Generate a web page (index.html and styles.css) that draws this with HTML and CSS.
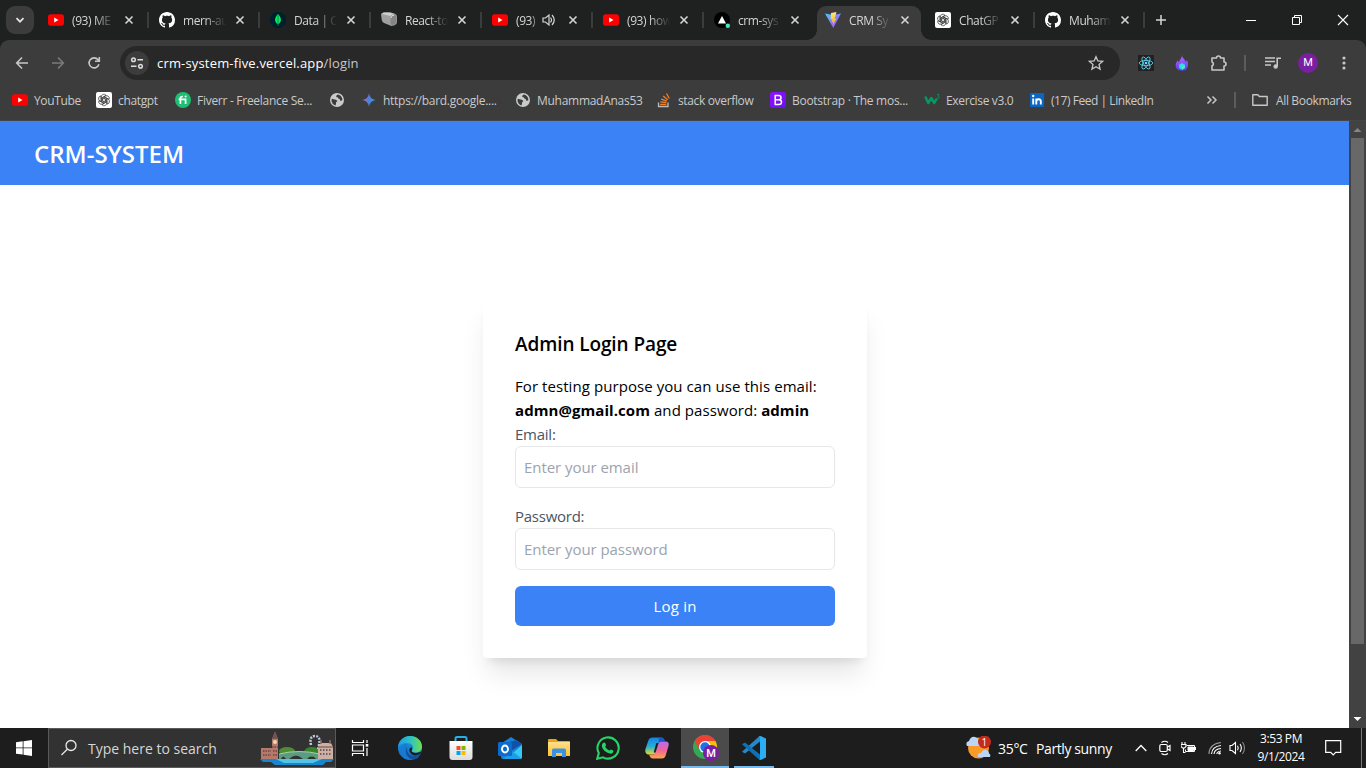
FILE: index.html
```html
<!DOCTYPE html>
<html lang="en">
<head>
<meta charset="utf-8">
<title>CRM System</title>
<link rel="stylesheet" href="styles.css">
</head>
<body>
<svg class="defs" width="0" height="0">
  <defs>
    <linearGradient id="vb" x1="0" y1="0" x2="1" y2="1"><stop offset="0" stop-color="#41d1ff"/><stop offset="1" stop-color="#bd34fe"/></linearGradient>
    <linearGradient id="vy" x1="0" y1="0" x2="0" y2="1"><stop offset="0" stop-color="#ffea83"/><stop offset="1" stop-color="#ffa800"/></linearGradient>
    <linearGradient id="bard"><stop offset="0" stop-color="#b06ab8"/><stop offset=".5" stop-color="#4a80dd"/><stop offset="1" stop-color="#2ea6e0"/></linearGradient>
    <linearGradient id="flame" x1="0" y1="0" x2="0" y2="1"><stop offset="0" stop-color="#b86bff"/><stop offset="1" stop-color="#5b3df0"/></linearGradient>
    <linearGradient id="edgeA" x1="0" y1="0" x2="1" y2="0"><stop offset="0" stop-color="#1d9de6"/><stop offset=".5" stop-color="#2cc1c4"/><stop offset="1" stop-color="#6de14d"/></linearGradient>
    <linearGradient id="edgeB" x1="0" y1="0" x2="0" y2="1"><stop offset="0" stop-color="#1b9de2"/><stop offset="1" stop-color="#1267c4"/></linearGradient>
    <linearGradient id="copA" x1="0" y1="0" x2="0" y2="1"><stop offset="0" stop-color="#1482e8"/><stop offset=".55" stop-color="#27b1d0"/><stop offset="1" stop-color="#e8dc27"/></linearGradient>
    <linearGradient id="copB" x1="0" y1="0" x2="0" y2="1"><stop offset="0" stop-color="#b56cf3"/><stop offset=".5" stop-color="#f0649c"/><stop offset="1" stop-color="#ffa34f"/></linearGradient>
    <linearGradient id="folderG" x1="0" y1="0" x2="0" y2="1"><stop offset="0" stop-color="#ffe08a"/><stop offset="1" stop-color="#fcc232"/></linearGradient>
    <linearGradient id="bs" x1="0" y1="0" x2="1" y2="1"><stop offset="0" stop-color="#9013fe"/><stop offset="1" stop-color="#6610f2"/></linearGradient>
    <linearGradient id="store" x1="0" y1="0" x2="0" y2="1"><stop offset="0" stop-color="#fff"/><stop offset="1" stop-color="#dcdcdc"/></linearGradient>
    <symbol id="yt" viewBox="0 0 16 16"><rect y="2.3" width="16" height="11.4" rx="2.8" fill="#f00"/><path d="M6.2 5.6v4.8L10.5 8z" fill="#fff"/></symbol>
    <symbol id="gh" viewBox="0 0 16 16"><path fill="#fff" d="M8 0C3.58 0 0 3.58 0 8c0 3.54 2.29 6.53 5.47 7.59.4.07.55-.17.55-.38 0-.19-.01-.82-.01-1.49-2.01.37-2.53-.49-2.69-.94-.09-.23-.48-.94-.82-1.13-.28-.15-.68-.52-.01-.53.63-.01 1.08.58 1.23.82.72 1.21 1.87.87 2.33.66.07-.52.28-.87.51-1.07-1.78-.2-3.64-.89-3.64-3.95 0-.87.31-1.59.82-2.15-.08-.2-.36-1.02.08-2.12 0 0 .67-.21 2.2.82.64-.18 1.32-.27 2-.27s1.36.09 2 .27c1.53-1.04 2.2-.82 2.2-.82.44 1.1.16 1.92.08 2.12.51.56.82 1.27.82 2.15 0 3.07-1.87 3.75-3.65 3.95.29.25.54.73.54 1.48 0 1.07-.01 1.93-.01 2.2 0 .21.15.46.55.38A8.01 8.01 0 0 0 16 8c0-4.42-3.58-8-8-8"/></symbol>
    <symbol id="gpt" viewBox="0 0 16 16"><rect width="16" height="16" rx="2" fill="#fff"/><g fill="none" stroke="#222" stroke-width=".65"><g id="petal"><path d="M5.300 9.600V4.800a2.600 2.600 0 0 1 4.700-1.500L6.600 5.300v4.100"/></g><use href="#petal" transform="rotate(60 8 8)"/><use href="#petal" transform="rotate(120 8 8)"/><use href="#petal" transform="rotate(180 8 8)"/><use href="#petal" transform="rotate(240 8 8)"/><use href="#petal" transform="rotate(300 8 8)"/></g></symbol>
    <symbol id="globe" viewBox="0 0 16 16"><circle cx="8" cy="8" r="7" fill="#c9cacc"/><path d="M2.800 6.800l4 .9q1.700.5 1.500 1.800l-1.200.4q.2 1.300-.6 3.600Q3 12.500 2.500 8.500zM9 2.600q-2 .4-1.800 1.800.2 1 1.500.9.700 2 2 1.700l.4 1.400q1.400.7 2.300-.3Q13.200 3.600 9 2.600z" fill="#3c3c3c"/></symbol>
    <symbol id="x" viewBox="0 0 16 16"><path d="M4.500 4.500l7 7m0-7l-7 7" stroke="#d4d5d6" stroke-width="1.600" fill="none"/></symbol>
  </defs>
</svg>

<header class="tabstrip">
  <button class="tab-search"><svg width="12" height="12"><path d="M2.500 4.200L6 7.700l3.500-3.500" fill="none" stroke="#e3e3e3" stroke-width="1.800"/></svg></button>
  <div class="tab"><svg class="fav"><use href="#yt"/></svg><span>(93) ME</span><svg class="close"><use href="#x"/></svg></div>
  <div class="tab"><svg class="fav"><use href="#gh"/></svg><span>mern-au</span><svg class="close"><use href="#x"/></svg></div>
  <div class="tab"><svg class="fav" viewBox="0 0 16 16"><circle cx="8" cy="8" r="8" fill="#001e2b"/><path d="M8 2c4 4 3.800 8 0 10.500C4.200 10 4 6 8 2z" fill="#00ed64"/><path d="M8 3v11" stroke="#0a7a45" stroke-width=".9"/></svg><span>Data | C</span><svg class="close"><use href="#x"/></svg></div>
  <div class="tab"><svg class="fav" viewBox="0 0 16 16"><path d="M0 2.500Q0 .800 2.500.500L9 .300l5 1.500q2 1 2 3v5.500q0 2-2.500 3l-3 .7L3 11Q1 10 .8 8z" fill="#a0a0a0"/><path d="M1 2Q2 .600 4 .600l5 .1 3.500 1L9.500 4z" fill="#cfcfcf"/><path d="M9.500 6q0-2 1.500-2.800T14 3q1.500.7 1.500 2.500v5q-1 2-4.500 2.800-1.500-.8-1.500-2.500z" fill="#858585"/><path d="M10 6q0-1.500 1-2.200l2-.6" fill="none" stroke="#e2e2e2"/></svg><span>React-to</span><svg class="close"><use href="#x"/></svg></div>
  <div class="tab"><svg class="fav"><use href="#yt"/></svg><span class="short">(93)</span><svg class="sound" viewBox="0 0 14 14"><path d="M1 5h2.500L7 2v10L3.500 9H1z" fill="none" stroke="#d4d5d6" stroke-width="1.200"/><path d="M8.500 4.500q2 2.500 0 5M10 2q4.500 5 0 10" fill="none" stroke="#d4d5d6" stroke-width="1.200"/></svg><svg class="close"><use href="#x"/></svg></div>
  <div class="tab"><svg class="fav"><use href="#yt"/></svg><span>(93) how</span><svg class="close"><use href="#x"/></svg></div>
  <div class="tab nosep"><svg class="fav" viewBox="0 0 16 16"><circle cx="8" cy="8" r="8" fill="#000"/><path d="M8 4l4 7.500H4z" fill="#fff"/><circle cx="13.800" cy="13.800" r="2.200" fill="#50e3c2"/></svg><span>crm-sys</span><svg class="close"><use href="#x"/></svg></div>
  <div class="tab active"><svg class="fav" viewBox="0 0 16 16"><path d="M0 1.500L8 3l8-1.500L8.300 16z" fill="url(#vb)"/><path d="M11.500 0L6 1.100 5.600 7.700l1.800-.4-.6 3 1.400-.4-.5 3.600 3.600-7-1.700.3z" fill="url(#vy)"/></svg><span>CRM Sy</span><svg class="close"><use href="#x"/></svg></div>
  <div class="tab late"><svg class="fav"><use href="#gpt"/></svg><span>ChatGP</span><svg class="close"><use href="#x"/></svg></div>
  <div class="tab late"><svg class="fav"><use href="#gh"/></svg><span>Muham</span><svg class="close"><use href="#x"/></svg></div>
  <svg class="newtab" width="12" height="12"><path d="M6 1v10M1 6h10" stroke="#d4d5d6" stroke-width="1.500"/></svg>
  <div class="winctl">
    <svg width="12" height="12"><path d="M1 6.500h10" stroke="#fff"/></svg>
    <svg width="12" height="12" fill="none" stroke="#fff"><path d="M1.500 3.500h7v7h-7zM3.500 3.500v-2h7v7h-2"/></svg>
    <svg width="12" height="12"><path d="M1 1l10 10M11 1L1 11" stroke="#fff" stroke-width="1.100"/></svg>
  </div>
</header>

<div class="toolbar-wrap">
<nav class="toolbar">
  <svg class="nav-i" viewBox="0 0 16 16"><path d="M14 8H3M8 2.500L2.700 8 8 13.500" fill="none" stroke="#c7c7c7" stroke-width="1.600"/></svg>
  <svg class="nav-i" viewBox="0 0 16 16"><path d="M2 8h11M8 2.500L13.300 8 8 13.500" fill="none" stroke="#7b7b7b" stroke-width="1.600"/></svg>
  <svg class="nav-i" viewBox="0 0 16 16"><path d="M12.900 9.200A5 5 0 1 1 12 4.800l1 1M13.300 2v4.200H9" fill="none" stroke="#c7c7c7" stroke-width="1.600"/></svg>
  <div class="omnibox">
    <div class="chip"><svg width="14" height="14" fill="none" stroke="#dedede" stroke-width="1.500"><circle cx="3.500" cy="3.700" r="1.800"/><path d="M7.500 3.700H13M1 10.300h5.500"/><circle cx="10.500" cy="10.300" r="1.800"/></svg></div>
    <span class="url">crm-system-five.vercel.app<i>/login</i></span>
    <svg class="star" viewBox="0 0 16 16"><path d="M8 1.700l1.850 4.300 4.700.4-3.550 3.100 1.050 4.600L8 11.650 3.950 14.100 5 9.500 1.450 6.400l4.700-.4z" fill="none" stroke="#c7c7c7" stroke-width="1.300"/></svg>
  </div>
  <div class="ext">
    <svg viewBox="0 0 16 16"><rect width="16" height="16" fill="#212121"/><g fill="none" stroke="#61dafb" stroke-width=".8"><ellipse cx="8" cy="8" rx="6.800" ry="2.600"/><ellipse cx="8" cy="8" rx="6.800" ry="2.600" transform="rotate(60 8 8)"/><ellipse cx="8" cy="8" rx="6.800" ry="2.600" transform="rotate(120 8 8)"/></g><circle cx="8" cy="8" r="1.300" fill="#61dafb"/></svg>
    <svg class="flame" viewBox="0 0 16 16"><path d="M8 0c.3 3.500 3.300 4.300 3.800 7.200L13 5c2 4.500 1.500 10.800-5 10.800S0 10 3.500 5.500L5 7.500C5 4.500 8 4 8 0z" fill="url(#flame)"/><path d="M8 8l2.900 1.700v3.400L8 14.800l-2.900-1.700V9.700z" fill="#35d7f2"/><path d="M8 11.400l2.900-1.700v3.400L8 14.800z" fill="#42efb0"/></svg>
    <svg class="puzzle" viewBox="0 0 18 18"><path d="M2 4h4.500a2 2 0 0 1 4 0H14v4a2 2 0 0 1 0 4v4H2v-4.200a2 2 0 0 0 0-3.800z" fill="none" stroke="#c7c7c7" stroke-width="1.600" stroke-linejoin="round"/></svg>
    <b class="vsep"></b>
    <svg class="media" viewBox="0 0 16 16"><path d="M0 3h10M0 6.500h10M0 10h6" stroke="#c7c7c7" stroke-width="1.500"/><path d="M12.200 11V3.300H16" fill="none" stroke="#c7c7c7" stroke-width="1.600"/><circle cx="10.700" cy="11.500" r="2.200" fill="#c7c7c7"/></svg>
    <span class="avatar">M</span>
    <svg class="dots" viewBox="0 0 4 16"><circle cx="2" cy="3" r="1.600"/><circle cx="2" cy="8" r="1.600"/><circle cx="2" cy="13" r="1.600"/></svg>
  </div>
</nav>

<nav class="bookmarks">
  <a class="w84"><svg><use href="#yt"/></svg>YouTube</a>
  <a class="w79"><svg><use href="#gpt"/></svg>chatgpt</a>
  <a class="w154"><svg viewBox="0 0 16 16"><circle cx="8" cy="8" r="8" fill="#1dbf73"/><path d="M5.400 12V6.200Q5.400 4.500 7.800 4.700M3.600 7.300h7V12" fill="none" stroke="#fff" stroke-width="1.700"/><circle cx="10.600" cy="4.600" r="1" fill="#fff"/></svg><span>Fiverr - Freelance Se...</span></a>
  <a class="w32"><svg><use href="#globe"/></svg></a>
  <a class="w154"><svg viewBox="0 0 16 16"><path d="M8 1.500Q9 7 14.500 8 9 9 8 14.500 7 9 1.500 8 7 7 8 1.500z" fill="url(#bard)"/></svg>https://bard.google....</a>
  <a class="w141"><svg><use href="#globe"/></svg>MuhammadAnas53</a>
  <a class="w114"><svg viewBox="0 0 16 16"><path d="M2.500 10.500v4h9.500v-4" fill="none" stroke="#bcbbbb" stroke-width="1.300"/><path d="M4.200 12.400h6M4.400 9.900l6 .7M5.200 7.100l5.600 2M7.200 4l4.500 3.700M10.500 1.500l2.800 5" stroke="#f48024" stroke-width="1.300"/></svg>stack overflow</a>
  <a class="w154"><svg viewBox="0 0 16 16"><rect width="16" height="16" rx="2.500" fill="url(#bs)"/><path d="M5.200 3.500h3.500q2.300 0 2.300 2.200 0 2-2.300 2H5.200h3.800q2.500 0 2.500 2.400T9 12.500H5.200z" fill="none" stroke="#fff" stroke-width="1.500"/></svg>Bootstrap · The mos...</a>
  <a class="w106"><svg viewBox="0 0 16 16"><path d="M1.200 4.500L4.300 11l3-5 3 5 2.500-4.500" fill="none" stroke="#059862" stroke-width="2.500" stroke-linejoin="round"/><path d="M13 2.500h2l-1 1.500q1.800 0 .8 2-.8.600-1.800.2" fill="none" stroke="#059862" stroke-width=".8"/></svg>Exercise v3.0</a>
  <a class="feed"><svg viewBox="0 0 16 16"><rect x="0" y="1" width="14" height="14" rx="1" fill="#0a66c2"/><path d="M3.200 6.500v6M6.300 6.500v6M6.300 9.500Q6.500 7.300 8.700 7.300t2.100 2.300v2.900" fill="none" stroke="#fff" stroke-width="1.900"/><circle cx="3.200" cy="4" r="1.200" fill="#fff"/></svg>(17) Feed | LinkedIn</a>
  <div class="bm-right">
    <svg class="more" width="12" height="12"><path d="M1.500 2.500L5 6 1.500 9.500M6.500 2.500L10 6 6.500 9.500" fill="none" stroke="#c7c7c7" stroke-width="1.500"/></svg>
    <b class="vsep"></b>
    <a><svg viewBox="0 0 16 16"><path d="M.8 13.200V2.800h5l1.600 1.700h7.800v8.700z" fill="none" stroke="#c7c7c7" stroke-width="1.400" stroke-linejoin="round"/></svg><span class="all">All Bookmarks</span></a>
  </div>
</nav>
</div>

<div class="viewport">
  <div class="page">
    <div class="brandbar"><h1>CRM-SYSTEM</h1></div>
    <main>
      <form class="card">
        <h2>Admin Login Page</h2>
        <p>For testing purpose you can use this email:<br><b>admn@gmail.com</b> and password: <b>admin</b></p>
        <label>Email:</label>
        <input type="text" placeholder="Enter your email">
        <label>Password:</label>
        <input type="text" placeholder="Enter your password">
        <button type="button">Log in</button>
      </form>
    </main>
  </div>
  <div class="scrollbar">
    <svg width="17" height="17"><path d="M4.500 11h8l-4-4z" fill="#868686"/></svg>
    <div class="thumb"></div>
    <svg class="down" width="17" height="17"><path d="M4.500 6h8l-4 4z" fill="#fff"/></svg>
  </div>
</div>

<footer class="taskbar">
  <div class="start"><svg width="16" height="16" fill="#fff"><path d="M0 2.200L6.700 1.300V7.500H0zM7.500 1.200L16 0v7.500H7.500zM0 8.300h6.700v6.300L0 13.700zM7.500 8.300H16V16l-8.500-1.200z"/></svg></div>
  <div class="search">
    <svg width="18" height="18" fill="none" stroke="#e8e8e8" stroke-width="1.300"><circle cx="11" cy="6.500" r="5"/><path d="M7.300 10.300L1.500 16"/></svg>
    <span>Type here to search</span>
    <svg class="scene" width="74" height="37" viewBox="0 0 74 37">
      <ellipse cx="27" cy="21" rx="8" ry="4" fill="#4f8c35"/><ellipse cx="52" cy="22" rx="8" ry="5" fill="#37842b"/>
      <path d="M0 29h74l-3 3h-5l-3 3H15l-4-3H3z" fill="#1686cf"/><path d="M16 29h46l-9 4H24z" fill="#53c3e7"/>
      <path d="M19 29v-5q20-5 41 0v5h-4q-4-6-9 0h-4q-7-7-14 0h-3q-3-5-5 0z" fill="#5b9b83"/><path d="M19 24q20-5 41 0" fill="none" stroke="#a4d3a1"/>
      <path d="M1 18h11V9l3-7 3 7v20H1z" fill="#b5796a"/><path d="M12 9l3-8 3 8z" fill="#75534f"/><path d="M12 17h6M3 21h8M3 25h8M13 21h4M13 25h4" stroke="#6e4143" stroke-width="1.500" stroke-dasharray="1.500 1"/><circle cx="15" cy="12" r="2" fill="#f0d8af"/>
      <path d="M51 15q-2-9 4-9t4 9l-1 5" fill="none" stroke="#becde2" stroke-width="2.500" stroke-dasharray="2 1.200"/>
      <path d="M58 17l3-4h10l2 4v12H58z" fill="#ceb0a2"/><path d="M58 17h15M61 10v4M70 10v4" stroke="#8e6b68" stroke-width="1.500"/><path d="M60 20h12M60 24h12" stroke="#735b68" stroke-width="2" stroke-dasharray="1.500 1.500"/>
    </svg>
  </div>
  <div class="task tview"><svg width="18" height="18" fill="none" stroke="#fff" stroke-width="1.200"><path d="M1.500 1v2.500h11V1M1.500 6h11v6h-11zM1.500 17v-2.500h11V17M16 1v3M16 9v8"/><path d="M14.700 5h2.600v2.600h-2.600z" fill="#fff" stroke="none"/></svg></div>
  <div class="task edge"><svg width="24" height="24" viewBox="0 0 24 24"><circle cx="12" cy="12" r="12" fill="url(#edgeB)"/><path d="M0 11C1 4 6 0 12 0c7 0 12 5 12 10.500 0 4-3 6-6.500 6-3 0-4.500-1-3.500-2.500 3-4-1-7-5-7-4 0-8 2-9 4z" fill="url(#edgeA)"/><path d="M8.500 10c-3 6 1 12 8 12.500-8 4-15-2-14-9 .7-4 4-6 7-5.500z" fill="#1a79d3"/><path d="M9.500 10.500c-2 5 2 10 7.500 9.500 2 0 4-1 5.500-2l-2.500 4c-2 1.500-5.500 1.700-8 .5-5-3-5-9-2.500-12z" fill="#10539d"/><path d="M13.800 11.500c1.300 2-1.500 3.500.7 4.700 2.500 1.300 6 .8 9-.7L22 18c-4 2.400-8.500 1.800-10.300-2.200-.9-2.200.3-4.700 2.100-4.300z" fill="#1d1d1d"/></svg></div>
  <div class="task"><svg width="24" height="24" viewBox="0 0 24 24"><path d="M6.500 6V2.500q0-1.500 1.500-1.500h8q1.500 0 1.500 1.500V6" fill="none" stroke="#2baee8" stroke-width="2"/><path d="M.5 5h23v16q0 3-3 3h-17q-3 0-3-3z" fill="url(#store)"/><path d="M7.500 10h4v4h-4z" fill="#f25022"/><path d="M12.500 10h4v4h-4z" fill="#7fba00"/><path d="M7.500 15h4v4h-4z" fill="#00a4ef"/><path d="M12.500 15h4v4h-4z" fill="#ffb900"/></svg></div>
  <div class="task"><svg width="24" height="24" viewBox="0 0 24 24"><path d="M3 7.500L13 1l11 7v13q0 2-2 2H5q-2 0-2-2z" fill="#1a7fd6"/><path d="M11 6l8-2 5 4-11 7z" fill="#0f53a8"/><path d="M24 9v12q0 2-2 2H8z" fill="#35c9f5"/><path d="M5 23l9-8 9 7q-.5 1-1.500 1z" fill="#1e9ce8"/><rect y="6" width="14" height="14" rx="1.500" fill="#0b6cce"/><ellipse cx="7" cy="13" rx="3" ry="3.500" fill="none" stroke="#fff" stroke-width="1.900"/></svg></div>
  <div class="task"><svg width="22" height="22" viewBox="0 0 22 22"><path d="M0 3q0-1 1-1h7l2 2h11q1 0 1 1v14H0z" fill="#e8a416"/><path d="M0 5h22v14H0z" fill="url(#folderG)"/><path d="M4 20v-7q0-1.500 1.500-1.500h11q1.500 0 1.500 1.500v7h-4v-4H8v4z" fill="#3b93df"/></svg></div>
  <div class="task"><svg width="24" height="24" viewBox="0 0 24 24"><path d="M1.200 22.800l1.600-5.700A10.600 10.600 0 1 1 7 21.300z" fill="none" stroke="#25d366" stroke-width="2.100"/><path d="M8 6.500c.6-.3 1 0 1.200.5l.8 1.900c.2.700-.6 1.200-.9 1.700 1 2 2.400 3.300 4.300 4 .6-.3 1-1.400 1.500-1.200l2.300 1.100c.6.400.1 1.700-.4 2.300-1.200 1.300-3.500.9-5.300 0-2.200-1-4.200-2.900-5.200-5C5.300 9.500 6 7.300 8 6.500z" fill="#25d366"/></svg></div>
  <div class="task"><svg width="24" height="24" viewBox="0 0 24 24"><path d="M7 1.500h9q3 0 3.800 4H16q-1.700 0-2.300 2l-3 9q-.7 2-3 2H3Q-.5 17.500.5 13L3.500 4Q4.500 1.500 7 1.500z" fill="url(#copA)"/><path d="M17 22.500H8q-3 0-3.800-4H8q1.700 0 2.300-2l3-9q.7-2 3-2H21q3.500 0 2.500 4.500l-3 10q-1 2.500-3.500 2.500z" fill="url(#copB)"/><path d="M14 1.500h2q3 0 3.800 4H16q-1.700 0-2.300 2z" fill="#2255c0"/><path d="M11.300 7h2.200l-3 9.500H8.700z" fill="#1d1d1d"/></svg></div>
  <div class="task chrome"><svg width="26" height="26" viewBox="0 0 26 26"><circle cx="12" cy="12" r="12" fill="#34a853"/><path d="M12 12V6h10.400A12 12 0 0 1 12 24l5-9z" fill="#fbbc04"/><path d="M1.600 6A12 12 0 0 1 22.400 6H12l-5.300 9z" fill="#ea4335"/><circle cx="12" cy="12" r="6" fill="#fff"/><circle cx="12" cy="12" r="4.700" fill="#1a73e8"/><circle cx="18" cy="18" r="8" fill="#7b1fa2"/><text x="18" y="22" text-anchor="middle">M</text></svg></div>
  <div class="task code"><svg width="24" height="24" viewBox="0 0 24 24"><path d="M18 0v5.500L3 17.500 0 15.800 17 .4z" fill="#2489ca"/><path d="M18 24v-5.500L3 6.500 0 8.200l17 15.400z" fill="#1070b3"/><path d="M17 .3L18.500 0 24 2.500v19L18.500 24 17 23.700q1 .1 1-1.200v-21z" fill="#2bacf3"/></svg></div>
  <div class="tray">
    <svg class="weather" width="26" height="24" viewBox="0 0 26 24"><circle cx="12.500" cy="12" r="10.500" fill="#f89b27"/><path d="M1 10q-2-4 2-5 2-5 6-4 3 .5 4 4 3 1 2 5z" fill="#b9d5f7"/><path d="M12 21q-1-4 3-4 2-4 5-3 3 .5 3 3.500 2 1 1 3.500z" fill="#b9d5f7"/><circle cx="18.500" cy="6" r="6.500" fill="#c42b1c"/><text x="18.300" y="9.500" text-anchor="middle">1</text></svg>
    <span class="temp">35°C</span><span class="cond">Partly sunny</span>
    <svg class="chev" width="12" height="8"><path d="M.7 7L6 1.500 11.300 7" fill="none" stroke="#fff" stroke-width="1.300"/></svg>
    <svg class="cam" width="12" height="16" fill="none" stroke="#fff" stroke-width="1.200"><path d="M2.500 2.500Q6 0 9 2.500M2.500 13.500Q6 16 9 13.500"/><rect x=".8" y="4.500" width="7.500" height="7" rx="1.500"/><path d="M8.500 7l2.500-1.500v5L8.500 9"/></svg>
    <svg class="bat" width="16" height="12" fill="none" stroke="#fff"><path d="M5.500 3.500h8v6h-9v-2M14.500 5v3"/><path d="M7 5h5.500v3.500H7z" fill="#fff"/><path d="M1 0v2M4 0v2M0 2.500h5v2L3.500 6h-2L0 4.500zM2.500 6v4.500h2" stroke-width="1.100"/></svg>
    <svg class="wifi" width="14" height="14" fill="none" stroke="#fff" stroke-width="1.100"><g stroke="#999"><path d="M1 13Q1 3 13 1.500"/></g><path d="M3.500 13Q4 5.500 13 4.500M6 13Q6.500 8 13 7.500M8.800 13Q9 10.500 13 10"/><circle cx="11.500" cy="12.200" r="1.200" fill="#fff" stroke="none"/></svg>
    <svg class="vol" width="17" height="14" fill="none" stroke="#fff" stroke-width="1.100"><path d="M1 4.500h2L6.500 1.500v11L3 9.500H1zM8.500 4.800q1.500 2.200 0 4.400M11 3q2.700 4 0 8"/><path d="M13.500 1q4 6 0 12" stroke="#888"/></svg>
    <div class="clock"><span>3:53 PM</span><span>9/1/2024</span></div>
    <svg class="note" width="17" height="16"><path d="M.7.700h15v11.600h-5L8.200 14.800l-2.500-2.500h-5z" fill="none" stroke="#fff" stroke-width="1.200"/></svg>
    <b class="desk"></b>
  </div>
</footer>
</body>
</html>
```

FILE: styles.css
```css
* { box-sizing: border-box; }
body { margin: 0; width: 1366px; height: 768px; overflow: hidden; display: flex; flex-direction: column; font-family: "Open Sans", "Noto Sans", sans-serif; background: #fff; }
svg { flex: none; display: block; }
.defs { position: absolute; }

.tabstrip { height: 40px; flex: none; background: #1f2120; display: flex; align-items: center; color: #d4d5d6; }
.tab-search { width: 28px; height: 28px; margin: 0 4px 0 6px; border: 0; border-radius: 9px; background: #3c3c3c; display: grid; place-items: center; padding: 0; }
.tab { width: 111px; height: 34px; padding-left: 10px; display: flex; align-items: center; flex: none; position: relative; font-size: 12px; letter-spacing: -.4px; }
.tab::after { content: ""; position: absolute; right: 0; top: 9px; width: 2px; height: 16px; background: #3c3c3c; }
.tab.nosep::after { display: none; }
.fav { width: 16px; height: 16px; }
.tab span { width: 49px; margin-left: 8px; white-space: nowrap; mask-image: linear-gradient(90deg, #000 45%, transparent 88%); }
.tab .close { width: 16px; height: 16px; }
.tab span.short { width: 24px; mask-image: linear-gradient(90deg, #000 60%, transparent); }
.sound { width: 14px; height: 14px; margin-left: 2px; }
.tab .sound + .close { margin-left: 9px; }
.tab.active, .tab.late { width: 110px; }
.tab.active span, .tab.late span { width: 48px; }
.tab.active { isolation: isolate; align-self: flex-end; }
.tab.active svg, .tab.active span { margin-top: -6px; }
.tab.active::before { content: ""; position: absolute; z-index: -1; left: 2px; top: 0; width: 104px; height: 34px; background: #3c3c3c; border-radius: 9px 9px 0 0; }
.tab.active::after { z-index: -1; left: -8px; right: auto; top: auto; bottom: 0; width: 124px; height: 10px; background: radial-gradient(circle at 0 0, transparent 9.5px, #3c3c3c 10px) left / 10px 10px no-repeat, radial-gradient(circle at 100% 0, transparent 9.5px, #3c3c3c 10px) right / 10px 10px no-repeat; }
.newtab { margin-left: 10px; }
.winctl { margin-left: auto; display: flex; gap: 34px; padding-right: 17px; }

.toolbar-wrap { height: 81px; flex: none; background: #1f2120; }
.toolbar { height: 41px; background: #3c3c3c; border-radius: 9px 9px 0 0; display: flex; align-items: center; padding: 5px 0 0 14px; }
.nav-i { width: 16px; height: 16px; margin-right: 20px; }
.omnibox { width: 1000px; height: 34px; margin-left: -2px; border-radius: 17px; background: #282828; display: flex; align-items: center; padding: 0 16px 0 5px; color: #fff; font-size: 13px; }
.chip { width: 24px; height: 24px; border-radius: 50%; background: #3c3c3c; display: grid; place-items: center; margin-right: 8px; }
.url { letter-spacing: .17px; }
.url i { font-style: normal; color: #c7c7c7; }
.star { width: 16px; height: 16px; margin-left: auto; }
.ext { display: flex; align-items: center; padding-left: 18px; }
.ext svg { width: 16px; height: 16px; }
.ext .flame { margin-left: 20px; }
.ext .puzzle { width: 18px; height: 18px; margin-left: 20px; }
.vsep { width: 2px; height: 16px; background: #5c5c5c; flex: none; }
.ext .vsep { margin: 0 18px 0 16px; }
.ext .media { margin-left: 1px; }
.avatar { width: 20px; height: 20px; margin-left: 17px; border-radius: 50%; background: #7b1fa2; color: #fff; font: 11px/20px Roboto, sans-serif; text-align: center; }
.ext .dots { width: 4px; margin-left: 24px; fill: #c7c7c7; }

.bookmarks { height: 40px; background: #3c3c3c; border-bottom: 1px solid #464646; display: flex; align-items: center; padding: 0 15px 1px 12px; font-size: 12px; letter-spacing: -.35px; color: #c9cacb; }
.bookmarks a { display: flex; align-items: center; white-space: nowrap; flex: none; }
.bookmarks a svg { width: 16px; height: 16px; margin-right: 6px; }
.w84 { width: 84px; } .w79 { width: 79px; } .w154 { width: 154px; } .w32 { width: 32px; }
.w141 { width: 141px; } .w114 { width: 114px; } .w106 { width: 106px; }
.bookmarks .w154, .bookmarks .w141 { letter-spacing: -.28px; }
.bookmarks .feed svg { margin-right: 5px; }
.bookmarks .feed { letter-spacing: -.45px; }
.bm-right { margin-left: auto; display: flex; align-items: center; }
.bm-right .more { margin-right: 16px; }
.bm-right .vsep { margin-right: 16px; }
.bookmarks .bm-right a svg { margin-right: 8px; }
.all { width: 75px; }

.viewport { flex: 1; display: flex; min-height: 0; }
.page { width: 1349px; background: #fff; }
.brandbar { height: 64px; background: #3b82f6; display: flex; align-items: center; padding: 2px 34px 0; }
h1 { margin: 0; color: #fff; font-size: 24px; line-height: 32px; font-weight: 600; letter-spacing: 0; }
main { display: flex; justify-content: center; padding-top: 113px; }
.card { width: 384px; height: 360px; margin-left: 1px; padding: 32px; border-radius: 4px; background: #fff; box-shadow: 0 20px 25px -5px rgba(0,0,0,.1), 0 8px 10px -6px rgba(0,0,0,.1); font-size: 15px; line-height: 24px; }
h2 { margin: 0 0 16px; font-size: 19px; line-height: 28px; font-weight: 600; letter-spacing: -.1px; }
p { margin: 0; white-space: nowrap; letter-spacing: .07px; }
label { display: block; color: #4b5563; letter-spacing: -.25px; }
input { display: block; width: 320px; height: 42px; padding: 0 8px 1px; border: 1px solid #e5e7eb; border-radius: 6px; font: 15px "Open Sans", sans-serif; letter-spacing: -.06px; margin: 0 0 16px; }
input::placeholder { color: #9ca3af; }
.card button { width: 320px; height: 40px; border: 0; border-radius: 6px; background: #3b82f6; color: #fff; font: 15px "Open Sans", sans-serif; letter-spacing: .2px; padding: 0; display: block; }
.scrollbar { width: 17px; background: #424242; display: flex; flex-direction: column; }
.thumb { width: 13px; height: 506px; margin-left: 2px; background: #686868; }
.down { margin-top: auto; }

.taskbar { height: 40px; flex: none; background: #1d1d1d; display: flex; color: #fff; font-size: 14px; }
.start { width: 48px; display: grid; place-items: center; }
.search { width: 288px; background: #323232; border: 1px solid #5a5a5a; display: flex; align-items: center; padding: 0 1px 0 11px; color: #d6d6d6; }
.search span { margin-left: 10px; white-space: nowrap; }
.scene { margin-left: auto; }
.task { width: 49px; display: grid; place-items: center; }
.task.tview { width: 48px; }
.task.edge { width: 52px; }
.task.chrome { width: 48px; background: #4b4b4b; border-bottom: 2px solid #76b9ed; }
.task.chrome svg { margin: 2px 0 0 2px; }
.task text { font: 500 11px Roboto, sans-serif; fill: #fff; }
.task.code { width: 40px; margin-left: 5px; border-bottom: 2px solid #76b9ed; }
.task.code svg { margin-top: 2px; }
.tray { margin-left: auto; display: flex; align-items: center; white-space: nowrap; }
.weather text { font: 10px "Open Sans", sans-serif; fill: #fff; }
.temp { margin-left: 6px; width: 38px; letter-spacing: -.3px; }
.cond { width: 99px; letter-spacing: -.4px; }
.cam { margin-left: 12px; }
.bat { margin-left: 10px; }
.wifi { margin-left: 11px; }
.vol { margin-left: 7px; }
.clock { width: 62px; margin-left: 4px; display: flex; flex-direction: column; align-items: center; font-size: 12px; line-height: 18px; letter-spacing: -.4px; }
.note { margin-left: 13px; }
.desk { width: 1px; height: 40px; margin: 0 4px 0 19px; background: #777; }
```
